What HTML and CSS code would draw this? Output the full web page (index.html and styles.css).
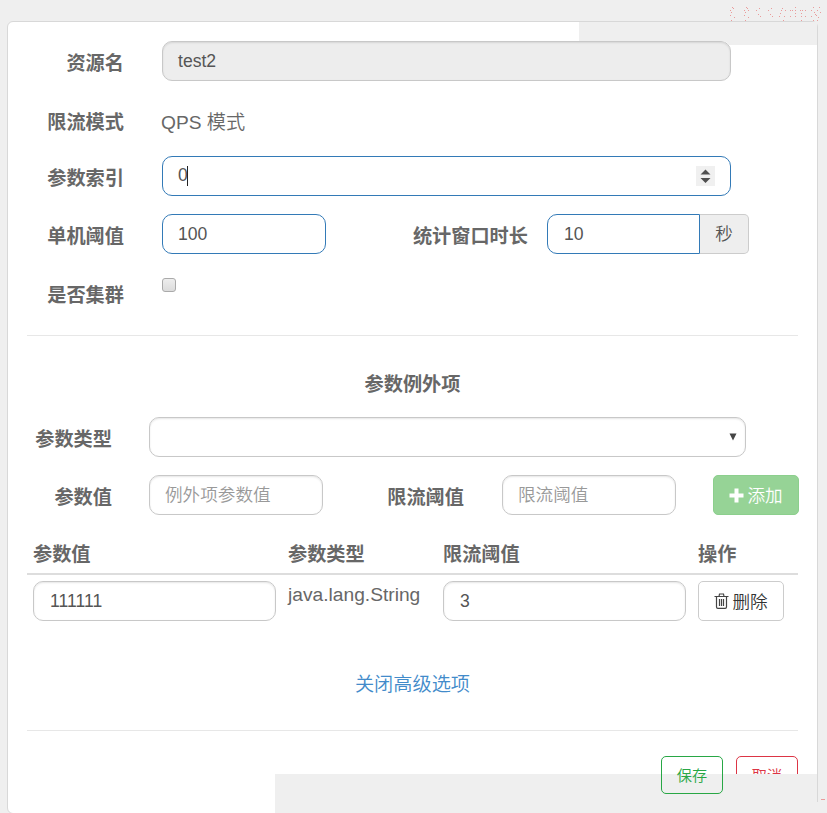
FILE: index.html
```html
<!DOCTYPE html>
<html lang="zh-CN">
<head>
<meta charset="utf-8">
<title>热点参数限流规则</title>
<link rel="stylesheet" href="styles.css">
</head>
<body>
<main class="panel">
  <div class="row r-name"><div class="label">资源名</div><div class="field wide disabled">test2</div></div>
  <div class="row r-mode"><div class="label">限流模式</div><div class="static">QPS 模式</div></div>
  <div class="row r-index"><div class="label">参数索引</div>
    <div class="field wide blue"><span>0</span><i class="caret"></i>
      <svg class="spin" width="19" height="20" viewBox="0 0 19 20"><path fill="#f0f0f0" d="M0 0h19v20H0z"/><path fill="#505050" d="M9.500 3.500l5 5h-10zM9.500 17l5-5h-10z"/></svg>
    </div>
  </div>
  <div class="row"><div class="label">单机阈值</div><div class="field single blue">100</div>
    <div class="label window-label">统计窗口时长</div><div class="field window blue">10</div><div class="addon">秒</div>
  </div>
  <div class="row r-cluster"><div class="label">是否集群</div><span class="checkbox"></span></div>
  <hr>
  <h2>参数例外项</h2>
  <div class="row lower"><div class="label">参数类型</div><div class="field select"><svg width="8" height="8" viewBox="0 0 8 8"><path fill="#444" d="M.5.500h7L4 7.500z"/></svg></div></div>
  <div class="row lower"><div class="label">参数值</div><div class="field item placeholder">例外项参数值</div>
    <div class="label limit-label">限流阈值</div><div class="field item placeholder">限流阈值</div>
    <div class="btn add"><svg width="15" height="15" viewBox="0 0 15 15"><path fill="#fff" d="M5.500.500h4v5h5v4h-5v5h-4v-5h-5v-4h5z"/></svg><span>添加</span></div>
  </div>
  <div class="table">
    <div class="cells head"><div>参数值</div><div>参数类型</div><div>限流阈值</div><div>操作</div></div>
    <div class="cells body"><div class="field">111111</div><div class="type">java.lang.String</div><div class="field limit">3</div>
      <div class="btn delete"><svg width="15" height="16" viewBox="0 0 15 16"><path fill="none" stroke="#444" stroke-width="1.200" d="M.5 3.500h14M5 3.500l.5-2.500h4l.5 2.500M2.500 3.500v10.500q0 1.400 1.400 1.400h7.200q1.400 0 1.400-1.400V3.500M5.500 6v7M7.500 6v7M9.500 6v7"/></svg><span>删除</span></div>
    </div>
  </div>
  <div class="toggle">关闭高级选项</div>
  <hr>
  <div class="actions"><div class="btn save">保存</div><div class="btn cancel">取消</div></div>
</main>
<div class="mask mask-top"></div>
<div class="mask mask-bottom"></div>
<svg class="specks" width="96" height="16" viewBox="0 0 96 16" fill="none" stroke="#e99c9c"><path transform="translate(0 .5)" d="M2 1h1M3 2h1M0 4h1M0 9h1M1 6h1M4 11h1M1 14h1M16 1h1M17 2h1M14 4h1M18 4h1M14 9h1M15 6h1M18 11h1M15 14h1M29 2h1M26 4h1M28 8h1M30 10h1M41 2h1M38 4h1M40 8h1M42 10h1M52 2h1M51 4h1M50 7h1M55 4h1M49 10h1M54 10h1M53 14h1M60 4h1M62 4h1M65 1h1M65 4h1M70 4h1M72 4h1M75 4h1M60 10h1M65 7h1M65 10h1M71 7h1M71 10h1M75 10h1M71 14h1M83 1h1M89 1h1M81 4h1M84 6h1M87 4h1M90 6h1M81 10h1M85 8h1M86 9h1M88 11h1M83 14h1M87 14h1"/></svg>
<i class="edge-mark"></i>
</body>
</html>
```

FILE: styles.css
```css
* { box-sizing: border-box; }
html, body { height: 813px; overflow: hidden; }
body {
  position: relative;
  margin: 0;
  padding: 21px 9px 0 7px;
  background: #efefef;
  color: #676767;
  font: 19.2px/28px "Liberation Sans", "Noto Sans CJK SC", sans-serif;
}
.panel {
  height: 793px;
  padding: 19px 19px 0;
  border: 1px solid #d8d8d8;
  border-radius: 6px;
  background: #fff;
}
.row { display: flex; height: 40px; margin-bottom: 18px; }
.label {
  flex: none;
  width: 97px;
  margin-right: 38px;
  padding-top: 9px;
  text-align: right;
  font-weight: 700;
  white-space: nowrap;
}
.r-name { margin-bottom: 19px; }
.r-mode { margin-bottom: 16px; }
.r-mode .static { padding-top: 9px; margin-left: -1px; }
.r-index { margin-bottom: 18px; }
.r-index .label { padding-top: 9px; }
.r-cluster { margin-top: 1px; margin-bottom: 23px; }
.r-cluster .label { padding-top: 10px; }
.static { font-weight: 350; }
.field {
  flex: none;
  display: flex;
  height: 40px;
  padding: 0 15px;
  border: 1px solid #c8c8c8;
  border-radius: 10px;
  background: #fff;
  box-shadow: inset 0 1px 2px rgba(0, 0, 0, .1);
  color: #555;
  font-size: 17.6px;
  font-weight: 350;
  line-height: 38px;
  white-space: nowrap;
}
.wide { width: 569px; }
.disabled { background: #ededed; }
.blue { border-color: #337ab7; box-shadow: none; }
.r-index .field { line-height: 37px; }
.caret { width: 1px; height: 20px; margin: 9px 0 0 -1px; background: #222; }
.spin { margin: 9px 0 0 auto; }
.single { width: 164px; }
.window-label { width: 116px; margin: 0 19px 0 86px; }
.window { width: 153px; padding-left: 16px; border-radius: 10px 0 0 10px; }
.addon {
  width: 49px;
  height: 40px;
  border: 1px solid #ccc;
  border-left: 0;
  border-radius: 0 5px 5px 0;
  background: #eee;
  color: #555;
  font-size: 17.6px;
  font-weight: 350;
  line-height: 38px;
  text-align: center;
}
.checkbox {
  width: 14px;
  height: 14px;
  margin-top: 6px;
  border: 1px solid #aaa;
  border-radius: 3px;
  background: linear-gradient(#eee, #dcdcdc);
}
hr { height: 1px; margin: 0; border: 0; background: #e7e7e7; }
h2 { margin: 35px 0 18px; font-size: 19.2px; line-height: 28px; text-align: center; }
.lower .label { width: 85px; margin-right: 37px; }
.select { width: 597px; align-items: center; justify-content: flex-end; padding-right: 8px; }
.item { width: 174px; }
.placeholder { color: #999; }
.lower .limit-label { width: 78px; margin: 0 38px 0 63px; }
.btn {
  flex: none;
  display: flex;
  align-items: center;
  justify-content: center;
  gap: 3px;
  width: 86px;
  height: 40px;
  border: 1px solid #ccc;
  border-radius: 5px;
  color: #333;
  font-size: 17.6px;
  font-weight: 350;
  white-space: nowrap;
}
.btn span { padding-top: 1px; }
.add { margin-left: 37px; border-color: #8ccf8d; background: #96d396; color: #fff; }
.cells { display: grid; grid-template-columns: 255px 155px 255px 100px; padding-left: 6px; }
.head { height: 42px; padding-top: 8px; border-bottom: 2px solid #ddd; font-weight: 700; }
.body { padding-top: 6px; }
.body .field { width: 243px; padding-left: 16px; }
.type { font-size: 19.2px; }
.toggle { margin: 50px 0 31px; color: #428bca; font-weight: 350; text-align: center; }
.actions { display: flex; justify-content: flex-end; gap: 13px; margin-top: 25px; }
.actions .btn { width: 62px; height: 38px; padding-top: 1px; font-size: 15.2px; }
.save { position: relative; z-index: 2; border-color: #28a745; color: #28a745; }
.cancel { border-color: #dc3545; color: #dc3545; }
.mask { position: absolute; background: #efefef; }
.mask-top { left: 579px; top: 22px; width: 238px; height: 23px; clip-path: polygon(0 0, 100% 0, 100% 100%, 149px 100%, 149px 22px, 147px 20px, 144px 19px, 0 19px); }
.mask-bottom { left: 275px; top: 774px; width: 552px; height: 39px; }
.mask-bottom::after { content: ""; position: absolute; left: 542px; top: 0; width: 1px; height: 28px; background: #d8d8d8; }
.specks { position: absolute; left: 730px; top: 6px; }
.edge-mark { position: absolute; left: 821px; top: 799px; width: 4px; height: 1px; background: #e99c9c; }
```
